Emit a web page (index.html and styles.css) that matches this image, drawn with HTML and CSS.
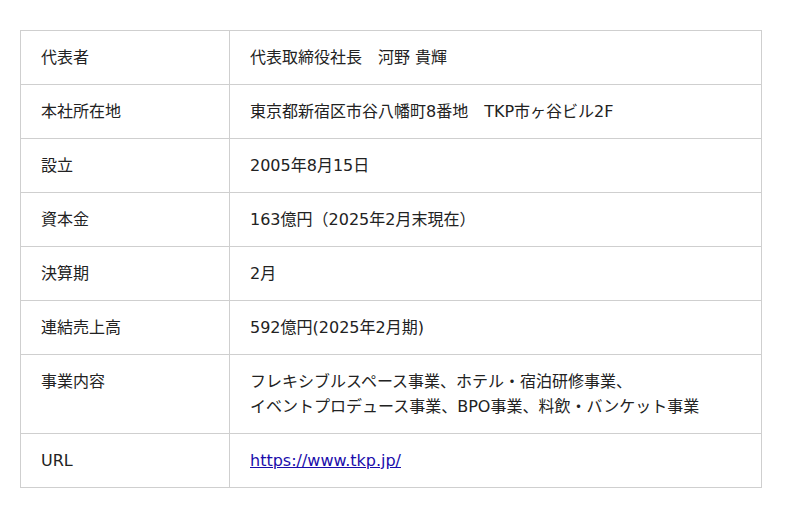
FILE: index.html
```html
<!DOCTYPE html>
<html lang="ja">
<head>
<meta charset="utf-8">
<link rel="stylesheet" href="styles.css">
</head>
<body>
<table class="info">
<tr><th>代表者</th><td>代表取締役社長　河野 貴輝</td></tr>
<tr><th>本社所在地</th><td>東京都新宿区市谷八幡町8番地　TKP市ヶ谷ビル2F</td></tr>
<tr><th>設立</th><td>2005年8月15日</td></tr>
<tr><th>資本金</th><td>163億円（2025年2月末現在）</td></tr>
<tr><th>決算期</th><td>2月</td></tr>
<tr><th>連結売上高</th><td>592億円(2025年2月期)</td></tr>
<tr><th>事業内容</th><td>フレキシブルスペース事業、ホテル・宿泊研修事業、<br>イベントプロデュース事業、BPO事業、料飲・バンケット事業</td></tr>
<tr><th>URL</th><td><a href="#">https://www.tkp.jp/</a></td></tr>
</table>
</body>
</html>
```
FILE: styles.css
```css
html, body {
  margin: 0;
  padding: 0;
  background: #fff;
}
body {
  padding: 30px 38px 0 20px;
  font-family: "DejaVu Sans", "Noto Sans CJK JP", sans-serif;
  font-size: 16px;
  color: #222;
}
.info {
  border-collapse: collapse;
  width: 742px;
}
.info th, .info td {
  border: 1px solid #cfcfcf;
  padding: 14px 20px;
  line-height: 25px;
  text-align: left;
  vertical-align: top;
  font-weight: normal;
}
.info th {
  width: 168px;
}
.info a {
  color: #1a0dab;
}
```
